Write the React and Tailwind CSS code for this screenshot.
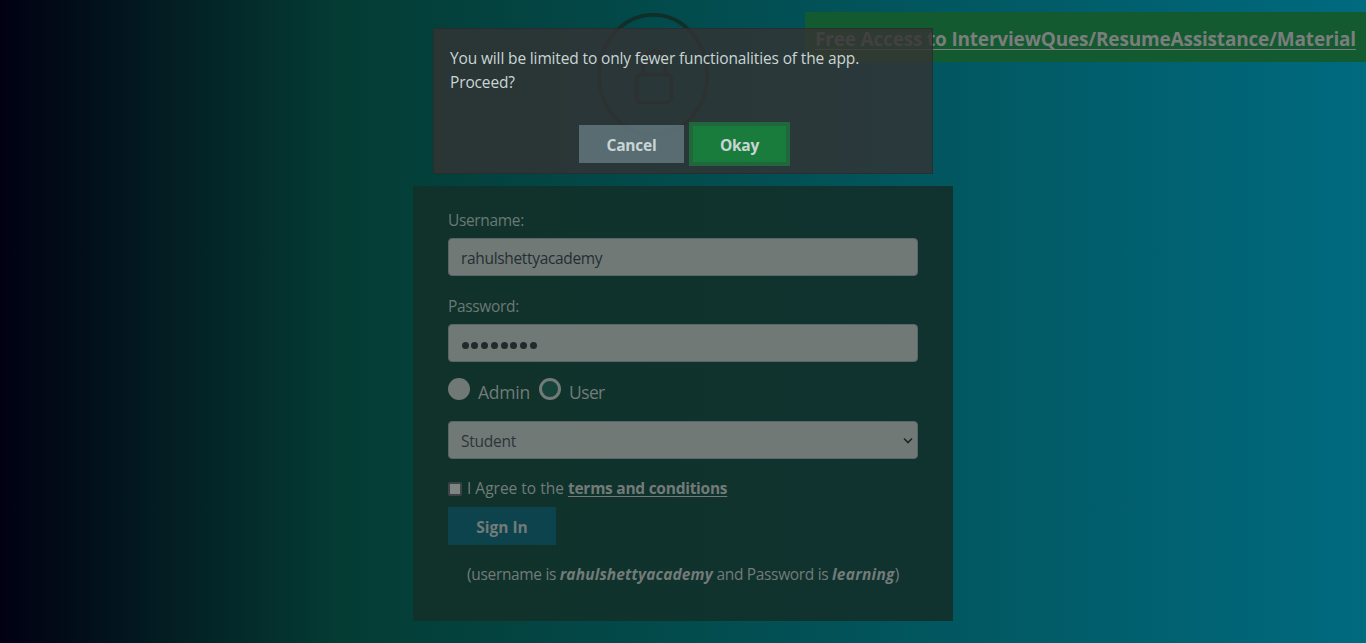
import React from "react";

function LockBadge() {
  return (
    <svg width="113" height="126" viewBox="0 0 113 126" fill="none" stroke="#102f29" strokeWidth="3.7">
      <ellipse cx="56.2" cy="62" rx="54" ry="60.2" />
      <rect x="39.5" y="61.5" width="35" height="28" rx="5" />
      <path d="M46.5 61.5V48.8a11 11 0 0 1 22 0V61.5" />
    </svg>
  );
}

function Field({ label, children }) {
  return (
    <div>
      <div className="h-6 pt-px text-[15.5px] leading-6 tracking-[-0.34px] text-[#6d7876]">{label}</div>
      <div className="mt-[7px] flex h-[38px] items-center rounded-[4px] border border-[#596567] bg-[#717977] px-3 pt-[3px] text-[15.5px] tracking-[-0.33px] text-[#242e31]">
        {children}
      </div>
    </div>
  );
}

function Chevron() {
  return (
    <svg className="-mr-[8px] ml-auto" width="10" height="8" viewBox="0 0 10 8" fill="none" stroke="#1c2527" strokeWidth="1.6">
      <path d="M1 1.5 5 5.5 9 1.5" />
    </svg>
  );
}

function LoginForm() {
  return (
    <section className="mx-auto h-[435px] w-[540px] bg-linear-to-r from-[#10322a] to-[#103330] px-[35px] pt-[21px] text-[#737b79]">
      <Field label="Username:">rahulshettyacademy</Field>
      <div className="mt-[17px]">
        <Field label="Password:">
          <span className="ml-[0.5px] flex gap-[2.8px] pt-[2px]">
            {Array.from({ length: 8 }, (_, i) => (
              <i key={i} className="size-[7px] rounded-full bg-[#202a2d]" />
            ))}
          </span>
        </Field>
      </div>
      <div className="mt-4 flex h-[22px] text-[17.5px] tracking-[-0.2px]">
        <span className="size-[22px] rounded-full bg-[#717977]" />
        <span className="ml-2 w-[53px] pt-[2px] leading-6">Admin</span>
        <span className="ml-2 size-[22px] rounded-full border-[3px] border-[#737b79] bg-[#17443a]" />
        <span className="ml-2 pt-[2px] leading-6 tracking-[-0.6px]">User</span>
      </div>
      <div className="mt-[21px] flex h-[38px] items-center rounded-[4px] border border-[#596567] bg-[#717977] px-3 pt-[2px] text-[15.5px] tracking-[-0.25px] text-[#2b3538]">
        <span className="pt-[2px]">Student</span>
        <Chevron />
      </div>
      <div className="mt-[18px] flex h-6 items-center text-[15.5px]">
        <span className="size-[14px] rounded-[2px] border-2 border-[#3d4448] bg-[#7f8583]" />
        <span className="ml-[5px] w-[101px] whitespace-nowrap">I Agree to the</span>
        <b className="tracking-[-0.26px] underline decoration-1 underline-offset-2">terms and conditions</b>
      </div>
      <div className="mt-[6px] flex h-[38px] w-[108px] items-center justify-center bg-[#0d434c] pt-[4px] text-[15.5px] font-bold">
        Sign In
      </div>
      <p className="mt-[17px] text-center text-[15.5px] leading-6 tracking-[-0.34px] whitespace-nowrap">
        (username is <b className="tracking-[0.12px] italic">rahulshettyacademy</b> and Password is{" "}
        <b className="tracking-[0.25px] italic">learning</b>)
      </p>
    </section>
  );
}

function ConfirmDialog() {
  return (
    <div className="absolute top-[28px] left-[433px] h-[146px] w-[500px] border border-[#2b2b2c]/90 bg-[#353233]/80 bg-clip-padding px-4 pt-[17px] text-[#c9d5d4]">
      <p className="text-[15.5px] leading-6 tracking-[-0.14px]">
        You will be limited to only fewer functionalities of the app.
        <br />
        Proceed?
      </p>
      <div className="mt-[28px] ml-[129px] flex items-center gap-[5px] text-[15.5px] font-bold tracking-[-0.25px]">
        <button className="h-[38px] w-[105px] bg-[#5b7076]/93 pt-[4px]">Cancel</button>
        <button className="h-[44px] w-[101px] border-4 border-[#20673d] bg-[#1a7c3c] pt-[4px]">Okay</button>
      </div>
    </div>
  );
}

export default function App() {
  return (
    <main className="relative h-[643px] w-[1366px] overflow-hidden bg-[linear-gradient(90deg,#010012_0%,#043c34_25%,#006a7f_100%)] font-['Open_Sans','Noto_Sans',sans-serif]">
      <div className="flex h-[186px] justify-end pt-3">
        <div className="absolute top-[13px] left-[597px]">
          <LockBadge />
        </div>
        <a className="block h-[50px] w-[561px] bg-[#145a30] pt-[14px] pl-[10px] text-[19px] leading-[27px] font-bold tracking-[-0.18px] whitespace-nowrap text-[#7a7e7c] underline decoration-1 underline-offset-[3px]">
          Free Access to InterviewQues/ResumeAssistance/Material
        </a>
      </div>
      <LoginForm />
      <ConfirmDialog />
    </main>
  );
}
